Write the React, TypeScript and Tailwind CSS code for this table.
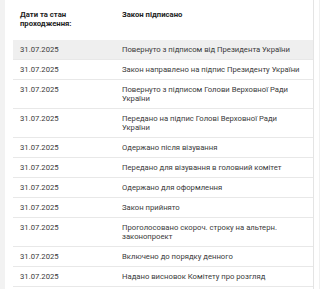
import React from "react";

const rows: { d: string; t: string; hl?: boolean }[] = [
  { d: "31.07.2025", t: "Повернуто з підписом від Президента України", hl: true },
  { d: "31.07.2025", t: "Закон направлено на підпис Президенту України" },
  { d: "31.07.2025", t: "Повернуто з підписом Голови Верховної Ради України" },
  { d: "31.07.2025", t: "Передано на підпис Голові Верховної Ради України" },
  { d: "31.07.2025", t: "Одержано після візування" },
  { d: "31.07.2025", t: "Передано для візування в головний комітет" },
  { d: "31.07.2025", t: "Одержано для оформлення" },
  { d: "31.07.2025", t: "Закон прийнято" },
  { d: "31.07.2025", t: "Проголосовано скороч. строку на альтерн. законопроект" },
  { d: "31.07.2025", t: "Включено до порядку денного" },
  { d: "31.07.2025", t: "Надано висновок Комітету про розгляд" },
];

export default function App() {
  return (
    <div
      className="w-[320px] h-[289px] overflow-hidden flex bg-white text-[#3a3a3a]"
      style={{ fontFamily: 'Roboto, "Noto Sans", sans-serif' }}
    >
      <div className="w-[5px] bg-[#f2f2f2] shrink-0" />
      <div className="flex-1 pl-[8px] pr-0">
        <div className="flex pt-[10px] pb-[12px] text-[7.7px] leading-[9px] font-bold text-[#222]">
          <div className="w-[102px] pl-[7px] shrink-0">
            Дати та стан
            <br />
            проходження:
          </div>
          <div className="pl-[7px]">Закон підписано</div>
        </div>
        {rows.map((r, i) => (
          <div
            key={i}
            className={`flex py-[5px] border-b border-[#e8e8e8] text-[7.7px] leading-[9px] ${r.hl ? "bg-[#efefef]" : ""}`}
          >
            <div className="w-[102px] pl-[7px] shrink-0">{r.d}</div>
            <div className="pl-[7px] pr-[7px] flex-1">{r.t}</div>
          </div>
        ))}
      </div>
      <div className="w-[7px] shrink-0 border-l border-[#e4e4e4] border-r border-r-[#f0f0f0]" />
    </div>
  );
}
